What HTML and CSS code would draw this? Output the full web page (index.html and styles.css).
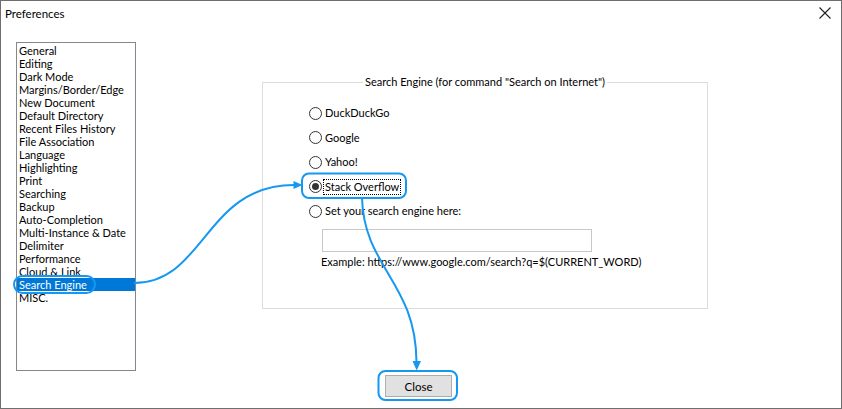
FILE: index.html
```html
<!DOCTYPE html>
<html lang="en">
<head>
<meta charset="utf-8">
<title>Preferences</title>
<link rel="stylesheet" href="styles.css">
</head>
<body>
<div class="window">
  <div class="titlebar">
    <span class="title">Preferences</span>
    <svg class="close-x" width="12" height="12" viewBox="0 0 12 12"><path d="M0.5 0.5 L11.5 11.5 M11.5 0.5 L0.5 11.5" stroke="#222" stroke-width="1.1" fill="none"/></svg>
  </div>
  <div class="main">
    <ul class="list">
      <li>General</li>
      <li>Editing</li>
      <li>Dark Mode</li>
      <li>Margins/Border/Edge</li>
      <li>New Document</li>
      <li>Default Directory</li>
      <li>Recent Files History</li>
      <li>File Association</li>
      <li>Language</li>
      <li>Highlighting</li>
      <li>Print</li>
      <li>Searching</li>
      <li>Backup</li>
      <li>Auto-Completion</li>
      <li>Multi-Instance &amp; Date</li>
      <li>Delimiter</li>
      <li>Performance</li>
      <li>Cloud &amp; Link</li>
      <li class="selected">Search Engine</li>
      <li>MISC.</li>
    </ul>
    <fieldset class="group">
      <legend>Search Engine (for command "Search on Internet")</legend>
      <div class="radios">
        <div class="radio"><span class="dot"></span><span class="label">DuckDuckGo</span></div>
        <div class="radio"><span class="dot"></span><span class="label">Google</span></div>
        <div class="radio"><span class="dot"></span><span class="label">Yahoo!</span></div>
        <div class="radio checked"><span class="dot"></span><span class="label focus">Stack Overflow</span></div>
        <div class="radio"><span class="dot"></span><span class="label">Set your search engine here:</span></div>
      </div>
      <div class="custom">
        <div class="textbox"></div>
        <div class="example">Example: https://www.google.com/search?q=$(CURRENT_WORD)</div>
      </div>
    </fieldset>
  </div>
  <div class="footer">
    <button class="btn">Close</button>
  </div>
  <svg class="annot" width="842" height="409" viewBox="0 0 842 409">
    <g fill="none" stroke="#1598f2" stroke-width="2">
      <rect x="14" y="276" width="81" height="17" rx="8.5"/>
      <rect x="302" y="173.5" width="104" height="24.5" rx="7"/>
      <rect x="378.5" y="371" width="78.5" height="29" rx="7"/>
      <path d="M134 283 C 205 283 205 185 294 185"/>
      <path d="M362 198 C 364 268 416 282 416.5 362"/>
    </g>
    <g fill="#1598f2">
      <path d="M302.5 185 L293.5 181 L293.5 189 Z"/>
      <path d="M416.7 370.5 L412.5 361 L421 361 Z"/>
    </g>
  </svg>
</div>
</body>
</html>
```
FILE: styles.css
```css
html, body {
  margin: 0;
  padding: 0;
  background: #fff;
}
.window {
  position: relative;
  width: 842px;
  height: 409px;
  box-sizing: border-box;
  border: 1px solid #6f6f6f;
  background: #fff;
  font-family: Lato, "Liberation Sans", sans-serif;
  font-size: 11px;
  color: #000;
  display: flex;
  flex-direction: column;
}
.titlebar {
  height: 29px;
  display: flex;
  align-items: center;
  justify-content: space-between;
  padding: 0 10px 0 4px;
  box-sizing: border-box;
}
.title {
  font-size: 11.5px;
  line-height: 16px;
  margin-top: -4px;
}
.close-x {
  margin-top: -5px;
}
.main {
  display: flex;
  align-items: flex-start;
  padding: 12px 0 0 15px;
}
.list {
  list-style: none;
  margin: 0;
  padding: 1px 0 0 0;
  width: 120px;
  height: 329px;
  box-sizing: border-box;
  border: 1px solid #828790;
  flex: none;
}
.list li {
  height: 13px;
  line-height: 13px;
  padding-left: 2px;
  white-space: nowrap;
}
.list li.selected {
  background: #0078d7;
  color: #fff;
}
.group {
  margin: 32px 0 0 126px;
  padding: 0;
  width: 446px;
  height: 235px;
  box-sizing: border-box;
  border: 1px solid #dcdcdc;
  min-inline-size: 0;
}
.group legend {
  margin: 0 auto;
  padding: 0 2px;
  line-height: 16px;
  font-size: 11px;
}
.radios {
  padding: 11px 0 0 46px;
}
.radio {
  height: 24.5px;
  display: flex;
  align-items: center;
}
.dot {
  width: 13px;
  height: 13px;
  box-sizing: border-box;
  border: 1px solid #333;
  border-radius: 50%;
  background: #fff;
  display: flex;
  align-items: center;
  justify-content: center;
  flex: none;
}
.radio.checked .dot::after {
  content: "";
  width: 7px;
  height: 7px;
  border-radius: 50%;
  background: #333;
}
.label {
  margin-left: 1px;
  line-height: 14px;
  padding: 0 1px;
  border: 1px dotted transparent;
}
.label.focus {
  border-color: #000;
}
.custom {
  padding: 5px 0 0 59px;
}
.textbox {
  width: 270px;
  height: 23px;
  box-sizing: border-box;
  border: 1px solid #c8c8c8;
  background: #fff;
}
.example {
  margin-top: 2px;
  margin-left: -1px;
  line-height: 16px;
}
.footer {
  padding: 4px 0 0 384px;
}
.btn {
  width: 67px;
  height: 22px;
  box-sizing: border-box;
  border: 1px solid #adadad;
  background: #e1e1e1;
  font-family: Lato, "Liberation Sans", sans-serif;
  font-size: 11.5px;
  color: #000;
  padding: 0;
  margin: 0;
}
.annot {
  position: absolute;
  left: -1px;
  top: -1px;
  pointer-events: none;
}
```
